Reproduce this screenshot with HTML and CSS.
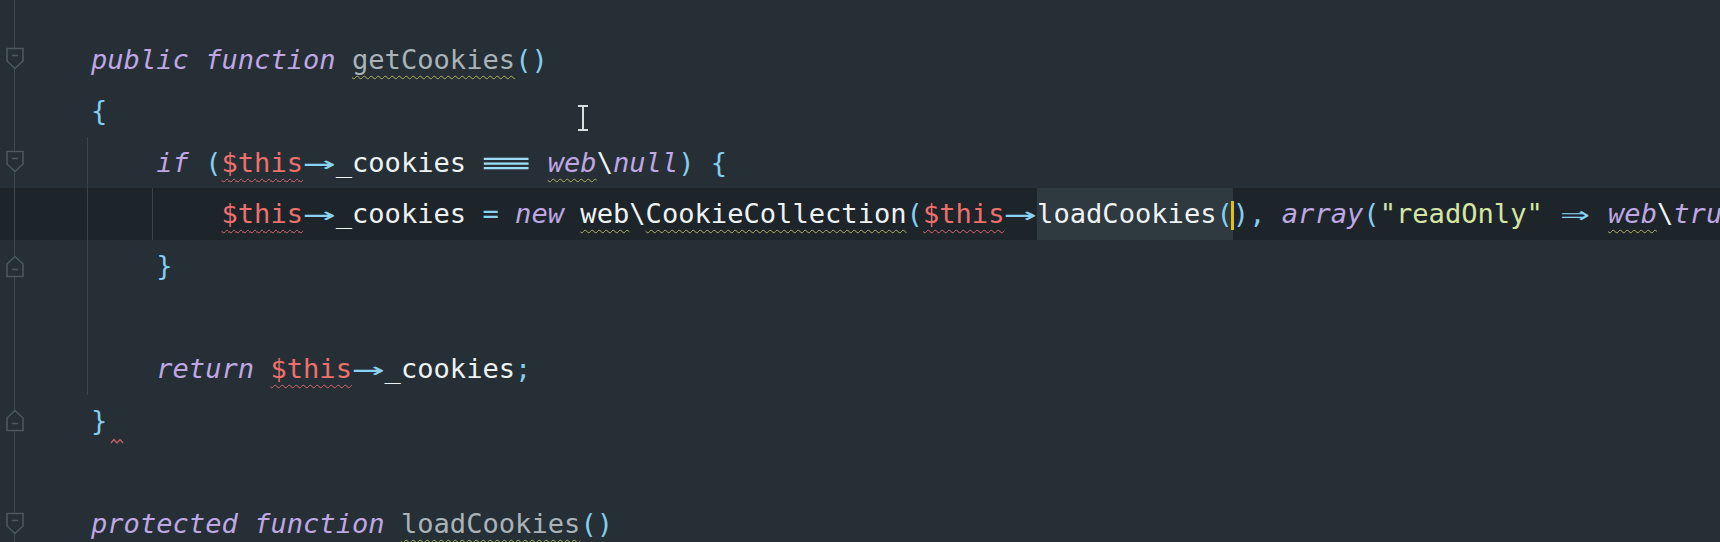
FILE: index.html
```html
<!DOCTYPE html>
<html lang="en">
<head>
  <meta charset="UTF-8" />
  <title>CookieCollection.php</title>
  <link rel="stylesheet" href="styles.css">
</head>
<body>
  <div class="editor">

    <div class="line">
      <div class="gutter">
        <svg class="fold" viewBox="0 0 20 24"><path d="M2 1.5 H18 V14 L10 21.5 L2 14 Z"/><path d="M7 8.5 H13"/></svg>
      </div>
      <div class="code"><span class="kw">public</span> <span class="kw">function</span> <span class="fn warn">getCookies</span><span class="p">()</span></div>
    </div>

    <div class="line">
      <div class="gutter"></div>
      <div class="code"><span class="p">{</span></div>
    </div>

    <div class="line g1">
      <div class="gutter">
        <svg class="fold" viewBox="0 0 20 24"><path d="M2 1.5 H18 V14 L10 21.5 L2 14 Z"/><path d="M7 8.5 H13"/></svg>
      </div>
      <div class="code">    <span class="kw">if</span> <span class="p">(</span><span class="var err">$this</span><span class="op arrow">→</span>_cookies <span class="op eq3">≡</span> <span class="kw warn">web</span>\<span class="kw">null</span><span class="p">)</span> <span class="p">{</span></div>
    </div>

    <div class="line g1 g2 current">
      <div class="gutter"></div>
      <div class="code">        <span class="var err">$this</span><span class="op arrow">→</span>_cookies <span class="op">=</span> <span class="kw">new</span> <span class="warn">web</span>\<span class="warn">CookieCollection</span><span class="p">(</span><span class="var err">$this</span><span class="op arrow">→</span><span class="hl">loadCookies<span class="p">(</span></span><span class="caret"></span><span class="p">),</span> <span class="kw">array</span><span class="p">(</span><span class="str">"readOnly"</span> <span class="op arrow2">⇒</span> <span class="kw warn">web</span>\<span class="kw">true</span><span class="p">)));</span></div>
    </div>

    <div class="line g1">
      <div class="gutter">
        <svg class="fold" viewBox="0 0 20 24"><path d="M2 22.5 H18 V10 L10 2.5 L2 10 Z"/><path d="M7 15.5 H13"/></svg>
      </div>
      <div class="code">    <span class="p">}</span></div>
    </div>

    <div class="line g1">
      <div class="gutter"></div>
      <div class="code"></div>
    </div>

    <div class="line g1">
      <div class="gutter"></div>
      <div class="code">    <span class="kw">return</span> <span class="var err">$this</span><span class="op arrow">→</span>_cookies<span class="p">;</span></div>
    </div>

    <div class="line">
      <div class="gutter">
        <svg class="fold" viewBox="0 0 20 24"><path d="M2 22.5 H18 V10 L10 2.5 L2 10 Z"/><path d="M7 15.5 H13"/></svg>
      </div>
      <div class="code"><span class="p">}</span><svg class="tick" viewBox="0 0 14 6"><path d="M1 5 L4 1.5 L7 5 L10 1.5 L13 5"/></svg></div>
    </div>

    <div class="line">
      <div class="gutter"></div>
      <div class="code"></div>
    </div>

    <div class="line">
      <div class="gutter">
        <svg class="fold" viewBox="0 0 20 24"><path d="M2 1.5 H18 V14 L10 21.5 L2 14 Z"/><path d="M7 8.5 H13"/></svg>
      </div>
      <div class="code"><span class="kw">protected</span> <span class="kw">function</span> <span class="fn warn">loadCookies</span><span class="p">()</span></div>
    </div>

  </div>

  <svg class="ibeam" viewBox="0 0 14 28">
    <path d="M2 2 H12 M7 2 V26 M2 26 H12"/>
  </svg>
</body>
</html>
```

FILE: styles.css
```css
* { margin: 0; padding: 0; box-sizing: border-box; }

html, body {
  width: 1720px;
  height: 542px;
  overflow: hidden;
  background: #252f35;
}

.editor {
  padding-top: 33.5px;
  height: 100%;
  background: linear-gradient(#3d4951, #3d4951) no-repeat 14px 0 / 1px 100%;
  font-family: "DejaVu Sans Mono", monospace;
  font-size: 27.1px;
  color: #eef2f3;
}

.line {
  display: flex;
  height: 51.6px;
  line-height: 51.6px;
}

.line.current {
  background-color: #1d252b;
}

.gutter {
  width: 85px;
  flex-shrink: 0;
  display: flex;
  align-items: center;
  padding-left: 5px;
  background: linear-gradient(#3d4951, #3d4951) no-repeat 14px 0 / 1px 100%;
}

.fold {
  width: 20px;
  height: 24px;
}

.fold path {
  fill: #252f35;
  stroke: #4a5861;
  stroke-width: 1.6;
}

.code {
  flex: 1;
  white-space: pre;
  padding-left: 6px;
}

.line.g1 .code {
  background: linear-gradient(#39444b, #39444b) no-repeat 2px 0 / 1px 100%;
}

.line.g1.g2 .code {
  background:
    linear-gradient(#39444b, #39444b) no-repeat 2px 0 / 1px 100%,
    linear-gradient(#39444b, #39444b) no-repeat calc(2px + 4ch) 0 / 1px 100%;
}

.kw {
  font-style: italic;
  color: #bea7e2;
}

.fn {
  color: #a9b3b8;
}

.p {
  color: #85cdf0;
}

.op {
  color: #8ad2f2;
}

.var {
  color: #ee6f6c;
}

.str {
  color: #d6e6a2;
}

.err {
  text-decoration: underline wavy #d8666d;
  text-decoration-thickness: 1.2px;
  text-underline-offset: 6px;
}

.warn {
  text-decoration: underline wavy #b0b165;
  text-decoration-thickness: 1.2px;
  text-underline-offset: 6px;
}

.arrow {
  display: inline-block;
  width: 2ch;
  text-align: center;
  transform: scaleX(2);
}

.arrow2 {
  display: inline-block;
  width: 2ch;
  text-align: center;
  transform: scaleX(1.8);
}

.eq3 {
  display: inline-block;
  width: 3ch;
  text-align: center;
  transform: scaleX(3.2);
  color: #9cdcf6;
}

.hl {
  display: inline-block;
  background-color: #2e3940;
}

.caret {
  display: inline-block;
  width: 3px;
  height: 29px;
  margin: 0 -1.5px;
  vertical-align: middle;
  background-color: #e2bf12;
}

.tick {
  width: 14px;
  height: 6px;
  vertical-align: -14px;
  margin-left: 3px;
}

.tick path {
  fill: none;
  stroke: #c4606a;
  stroke-width: 1.2;
}

.ibeam {
  position: absolute;
  left: 576px;
  top: 104px;
  width: 14px;
  height: 28px;
}

.ibeam path {
  fill: none;
  stroke: #d8dde0;
  stroke-width: 2;
}
```
